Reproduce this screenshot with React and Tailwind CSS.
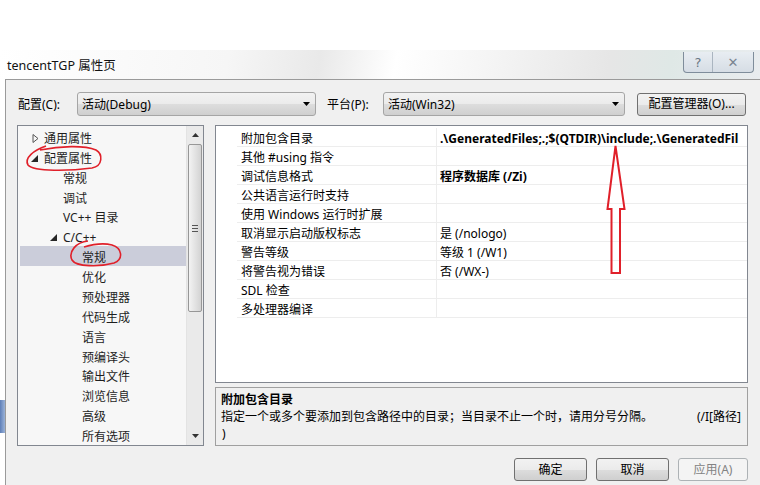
import React from "react";

const treeItems = [
  { t: "通用属性", lvl: 0, icon: "closed" },
  { t: "配置属性", lvl: 0, icon: "open" },
  { t: "常规", lvl: 1 },
  { t: "调试", lvl: 1 },
  { t: "VC++ 目录", lvl: 1 },
  { t: "C/C++", lvl: 1, icon: "open" },
  { t: "常规", lvl: 2, sel: true },
  { t: "优化", lvl: 2 },
  { t: "预处理器", lvl: 2 },
  { t: "代码生成", lvl: 2 },
  { t: "语言", lvl: 2 },
  { t: "预编译头", lvl: 2 },
  { t: "输出文件", lvl: 2 },
  { t: "浏览信息", lvl: 2 },
  { t: "高级", lvl: 2 },
  { t: "所有选项", lvl: 2 },
];

const props = [
  ["附加包含目录", ".\\GeneratedFiles;.;$(QTDIR)\\include;.\\GeneratedFil", true],
  ["其他 #using 指令", ""],
  ["调试信息格式", "程序数据库 (/Zi)", true],
  ["公共语言运行时支持", ""],
  ["使用 Windows 运行时扩展", ""],
  ["取消显示启动版权标志", "是 (/nologo)"],
  ["警告等级", "等级 1 (/W1)"],
  ["将警告视为错误", "否 (/WX-)"],
  ["SDL 检查", ""],
  ["多处理器编译", ""],
];

const lvlPad = ["pl-[26px]", "pl-[45px]", "pl-[64px]"];

function TreeIcon({ kind }) {
  if (kind === "closed")
    return (
      <svg width="7" height="9" viewBox="0 0 7 9" className="absolute left-[-12px] top-[4px]">
        <path d="M1 0.5 L6 4.5 L1 8.5 Z" fill="none" stroke="#555" strokeWidth="1" />
      </svg>
    );
  return (
    <svg width="7" height="7" viewBox="0 0 7 7" className="absolute left-[-13px] top-[5px]">
      <path d="M7 0 L7 7 L0 7 Z" fill="#262626" />
    </svg>
  );
}

function Combo({ w, text }) {
  return (
    <div
      className={`${w} shrink-0 h-[24px] flex items-center justify-between rounded-[3px] border border-[#a5a5a5] bg-[linear-gradient(#f2f2f2,#ebebeb_50%,#dddddd_51%,#cfcfcf)] pl-[4px] pr-[5px]`}
    >
      <span className="pt-[2px]">{text}</span>
      <svg width="7" height="4" viewBox="0 0 7 4">
        <path d="M0 0 L7 0 L3.5 4 Z" fill="#000" />
      </svg>
    </div>
  );
}

function Btn({ children, w, disabled }) {
  return (
    <div
      className={`${w} shrink-0 h-[23px] flex items-center justify-center rounded-[3px] border ${
        disabled
          ? "border-[#adb2b5] bg-[#f4f4f4] text-[#838383]"
          : "border-[#707070] bg-[linear-gradient(#f2f2f2,#ebebeb_50%,#dddddd_51%,#cfcfcf)] text-black"
      }`}
    >
      {children}
    </div>
  );
}

export default function App() {
  return (
    <div className="relative w-[760px] h-[485px] overflow-hidden bg-white text-[12px] leading-none text-black font-['Noto_Sans','Noto_Sans_CJK_SC',sans-serif]">
      {/* desktop above window */}
      <div className="h-[50px] bg-white" />
      {/* title bar */}
      <div className="h-[29px] flex items-center justify-between bg-[linear-gradient(100deg,#ffffff,#f6f6f6_30%,#e9e9e9_42%,#ffffff_52%,#f4f4f4_65%,#e6e6e6_80%,#dfe8e6_88%,#e9ecef)]">
        <span className="pl-[7px] pt-[3px] text-[12.5px] text-[#111]">tencentTGP 属性页</span>
        <div className="flex self-start h-[21px] mr-[6px] mt-[2px] rounded-b-[4px] border border-t-0 border-[#7f8d9b] bg-[linear-gradient(#e8edf2,#d6dde5)] overflow-hidden">
          <div className="w-[29px] flex items-center justify-center border-r border-[#aab5c0] text-[13px] text-[#6a7683] font-['DejaVu_Sans',sans-serif]">?</div>
          <div className="w-[40px] flex items-center justify-center text-[13px] text-[#7a8592] font-['DejaVu_Sans',sans-serif]">✕</div>
        </div>
      </div>
      {/* window body */}
      <div className="flex h-[406px]">
        <div className="w-[5px] shrink-0 flex flex-col bg-white">
          <div className="h-[321px]" />
          <div className="h-[33px] bg-[linear-gradient(90deg,#5e7fb8,#9bb3d8)]" />
        </div>
        <div className="flex-1 min-w-0 flex flex-col border-l border-t border-[#9a9a9a] bg-[#f0f0f0] pl-[11px] pr-[12px]">
          {/* config row */}
          <div className="flex items-center h-[24px] mt-[12px]">
            <span className="w-[60px] shrink-0 pl-[1px] pt-[2px]">配置(C):</span>
            <Combo w="w-[239px]" text="活动(Debug)" />
            <span className="w-[56px] shrink-0 ml-[11px] pt-[2px]">平台(P):</span>
            <Combo w="w-[242px]" text="活动(Win32)" />
            <div className="ml-[12px]">
              <Btn w="w-[109px]">配置管理器(O)...</Btn>
            </div>
          </div>
          {/* main area */}
          <div className="flex mt-[9px] h-[321px]">
            {/* tree */}
            <div className="w-[187px] shrink-0 flex border border-[#828790] bg-[#f7f7f7]">
              <div className="flex-1 flex flex-col pt-[1px] text-[#1e1e1e]">
                {treeItems.map((it, i) => (
                  <div
                    key={i}
                    className={`h-[20px] flex items-center pt-[4px] ${it.sel ? "ml-[2px] bg-[#cbcdda]" : ""}`}
                  >
                    <span className={`relative ${it.sel ? "pl-[62px]" : lvlPad[it.lvl]}`}>
                      <span className="relative">
                        {it.icon && <TreeIcon kind={it.icon} />}
                        {it.t}
                      </span>
                    </span>
                  </div>
                ))}
              </div>
              {/* scrollbar */}
              <div className="w-[17px] shrink-0 flex flex-col bg-[#eaeaea] border-l border-[#e3e3e3]">
                <div className="h-[18px] flex items-center justify-center">
                  <svg width="7" height="4" viewBox="0 0 7 4">
                    <path d="M0 4 L7 4 L3.5 0 Z" fill="#333" />
                  </svg>
                </div>
                <div className="mx-[1px] h-[168px] rounded-[2px] border border-[#979797] bg-[linear-gradient(90deg,#f3f3f3,#e3e3e3_50%,#d3d3d3)] flex items-center justify-center">
                  <div className="flex flex-col gap-[2px]">
                    <div className="w-[6px] h-[1px] bg-[#555]" />
                    <div className="w-[6px] h-[1px] bg-[#555]" />
                    <div className="w-[6px] h-[1px] bg-[#555]" />
                  </div>
                </div>
                <div className="flex-1" />
                <div className="h-[18px] flex items-center justify-center">
                  <svg width="7" height="4" viewBox="0 0 7 4">
                    <path d="M0 0 L7 0 L3.5 4 Z" fill="#333" />
                  </svg>
                </div>
              </div>
            </div>
            {/* right column */}
            <div className="ml-[11px] flex-1 min-w-0 flex flex-col">
              <div className="h-[258px] border border-[#828790] bg-white flex flex-col pt-[2px] overflow-hidden">
                {props.map(([n, v, b], i) => (
                  <div key={i} className="h-[19px] flex">
                    <div className="w-[21px] shrink-0 bg-white" />
                    <div className="w-[200px] shrink-0 flex items-center pl-[4px] pt-[3px] border-b border-r border-[#ededed] whitespace-nowrap">
                      {n}
                    </div>
                    <div
                      className={`flex-1 min-w-0 flex items-center pl-[3px] pt-[3px] border-b border-[#ededed] whitespace-nowrap overflow-hidden ${
                        b ? "font-bold" : ""
                      }`}
                    >
                      {v}
                    </div>
                  </div>
                ))}
              </div>
              <div className="mt-[4px] h-[59px] border border-[#a0a0a0] bg-[#f0f0f0] pl-[5px] pr-[6px] pt-[3px] flex flex-col">
                <div className="h-[17px] font-bold flex items-center">附加包含目录</div>
                <div className="h-[18px] flex items-center justify-between">
                  <span>指定一个或多个要添加到包含路径中的目录；当目录不止一个时，请用分号分隔。</span>
                  <span>(/I[路径]</span>
                </div>
                <div className="h-[16px] flex items-center pl-[1px]">)</div>
              </div>
            </div>
          </div>
          {/* buttons */}
          <div className="flex justify-end gap-[9px] mt-[12px]">
            <Btn w="w-[73px]">确定</Btn>
            <Btn w="w-[73px]">取消</Btn>
            <Btn w="w-[70px]" disabled>
              应用(A)
            </Btn>
          </div>
        </div>
      </div>

      {/* red annotations */}
      <svg className="absolute left-0 top-0 pointer-events-none" width="760" height="485" viewBox="0 0 760 485">
        <path
          d="M46 146 C34 150 24 158 28 165 C34 172 70 171 92 168 C103 166 103 154 96 150 C84 145 60 146 40 150"
          fill="none"
          stroke="#e0202a"
          strokeWidth="1.6"
        />
        <path
          d="M88 241 C76 242 68 252 72 260 C76 267 100 267 114 263 C124 259 122 248 112 245 C104 243 94 244 84 247"
          fill="none"
          stroke="#e0202a"
          strokeWidth="1.6"
        />
        <path
          d="M615.5 146 L624.5 209 L620 209 L620 273 L611.5 273 L611.5 209 L607.5 209 Z"
          fill="none"
          stroke="#e0202a"
          strokeWidth="2"
          strokeLinejoin="miter"
        />
      </svg>
    </div>
  );
}
